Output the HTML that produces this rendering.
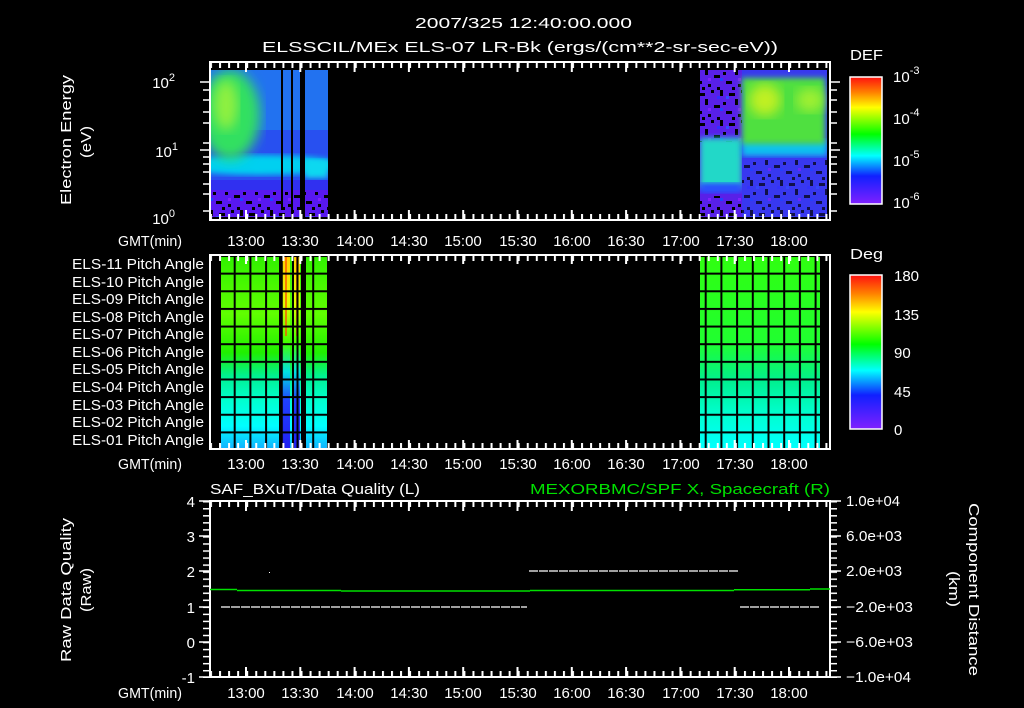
<!DOCTYPE html>
<html><head><meta charset="utf-8"><style>
html,body{margin:0;padding:0;background:#000;width:1024px;height:708px;overflow:hidden}
svg{display:block}
text{font-family:"Liberation Sans",sans-serif;fill:#fff;font-size:15px}
</style></head><body>
<svg width="1024" height="708" viewBox="0 0 1024 708" xmlns="http://www.w3.org/2000/svg">
<defs>
<linearGradient id="cb" x1="0" y1="0" x2="0" y2="1">
<stop offset="0" stop-color="#ff1010"/><stop offset="0.12" stop-color="#ff8000"/><stop offset="0.24" stop-color="#ffff00"/><stop offset="0.45" stop-color="#00ff00"/><stop offset="0.62" stop-color="#00ffff"/><stop offset="0.78" stop-color="#1020ff"/><stop offset="1" stop-color="#8020ff"/>
</linearGradient>
<pattern id="tx" x="210" y="0" width="9.05" height="708" patternUnits="userSpaceOnUse"><rect x="0" y="0" width="2" height="708" fill="#fff"/></pattern>
<pattern id="txM" x="245" y="0" width="54.3" height="708" patternUnits="userSpaceOnUse"><rect x="0" y="0" width="2" height="708" fill="#fff"/></pattern>
<pattern id="gv" x="218" y="0" width="15.7" height="708" patternUnits="userSpaceOnUse"><rect x="0" y="0" width="2" height="708" fill="#000"/></pattern>
<pattern id="gh" x="0" y="255" width="1024" height="17.64" patternUnits="userSpaceOnUse"><rect x="0" y="0" width="1024" height="2" fill="#000"/></pattern>
<pattern id="ty" x="0" y="501" width="1024" height="7.04" patternUnits="userSpaceOnUse"><rect x="0" y="0" width="1024" height="1.5" fill="#fff"/></pattern>
<pattern id="sp" x="0" y="0" width="30" height="30" patternUnits="userSpaceOnUse">
<rect x="0" y="0" width="3" height="6" fill="#000"/><rect x="9" y="3" width="6" height="3" fill="#000"/><rect x="21" y="0" width="3" height="3" fill="#000"/><rect x="3" y="12" width="3" height="3" fill="#000"/><rect x="15" y="9" width="3" height="6" fill="#000"/><rect x="24" y="15" width="6" height="3" fill="#000"/><rect x="6" y="21" width="6" height="3" fill="#000"/><rect x="18" y="24" width="3" height="3" fill="#000"/><rect x="27" y="27" width="3" height="3" fill="#000"/><rect x="12" y="27" width="3" height="3" fill="#000"/>
<rect x="27" y="6" width="3" height="3" fill="#3030ff"/><rect x="0" y="18" width="3" height="3" fill="#2040ff"/><rect x="18" y="18" width="3" height="3" fill="#8020ff"/><rect x="6" y="6" width="3" height="3" fill="#3050ff"/></pattern>
<filter id="bl"><feGaussianBlur stdDeviation="6"/></filter>
<filter id="bl2"><feGaussianBlur stdDeviation="3"/></filter>
<clipPath id="cL"><rect x="210" y="70" width="118" height="147"/></clipPath>
<clipPath id="cR"><rect x="700" y="70" width="127" height="147"/></clipPath>
</defs>

<text x="415" y="28" font-size="16" textLength="217" lengthAdjust="spacingAndGlyphs">2007/325 12:40:00.000</text>
<text x="262" y="52" font-size="16" textLength="516" lengthAdjust="spacingAndGlyphs">ELSSCIL/MEx ELS-07 LR-Bk  (ergs/(cm**2-sr-sec-eV))</text>

<!-- TOP PANEL data -->
<g clip-path="url(#cL)">
<rect x="210" y="70" width="118" height="147" fill="#2850f0"/>
<rect x="210" y="70" width="118" height="60" fill="#2080f0" opacity="0.7"/>
<ellipse cx="260" cy="165" rx="80" ry="10" fill="#00d0f0" filter="url(#bl2)"/>
<rect x="305" y="160" width="23" height="18" fill="#10d8f0" filter="url(#bl2)"/>
<ellipse cx="230" cy="115" rx="30" ry="45" fill="#30e060" filter="url(#bl)"/>
<ellipse cx="226" cy="105" rx="12" ry="25" fill="#90f040" filter="url(#bl)"/>
<rect x="210" y="180" width="118" height="12" fill="#3030f0"/>
<rect x="210" y="190" width="118" height="27" fill="#5818f0"/>
<rect x="210" y="192" width="118" height="25" fill="url(#sp)"/>
<rect x="281" y="70" width="2" height="140" fill="#000"/>
<rect x="291" y="70" width="2" height="147" fill="#000"/>
<rect x="300" y="70" width="5" height="147" fill="#000"/>
</g>
<g clip-path="url(#cR)">
<rect x="700" y="70" width="127" height="147" fill="#5820e8"/>
<rect x="700" y="70" width="42" height="72" fill="url(#sp)"/>
<rect x="700" y="138" width="42" height="50" fill="#20d8c8" filter="url(#bl2)"/>
<rect x="700" y="183" width="42" height="10" fill="#2850ff" filter="url(#bl2)"/>
<rect x="700" y="196" width="42" height="21" fill="url(#sp)"/>
<rect x="742" y="70" width="85" height="147" fill="#3838f0"/>
<rect x="742" y="160" width="85" height="57" fill="url(#sp)" opacity="0.7"/>
<rect x="742" y="140" width="85" height="16" fill="#10c0f0" filter="url(#bl2)"/>
<rect x="742" y="78" width="83" height="66" fill="#50e040" filter="url(#bl2)"/>
<ellipse cx="765" cy="100" rx="16" ry="16" fill="#c0f020" filter="url(#bl)"/>
<ellipse cx="810" cy="100" rx="14" ry="12" fill="#a0f030" filter="url(#bl)"/>
</g>
<!-- top frame -->
<rect x="210" y="62" width="620" height="158" fill="none" stroke="#fff" stroke-width="2"/>
<rect x="210" y="63" width="620" height="5" fill="url(#tx)"/>
<rect x="210" y="63" width="620" height="9" fill="url(#txM)"/>
<rect x="210" y="214" width="620" height="5" fill="url(#tx)"/>
<rect x="210" y="210" width="620" height="9" fill="url(#txM)"/>
<g stroke="#fff" stroke-width="1.5">
<path d="M200 82H210M203 90H210M203 100H210M203 112H210M203 123H210M203 143H210M200 150H210M203 157H210M203 164H210M203 172H210M203 184H210M203 194H210M203 211H210"/>
<path d="M830 82H840M830 90H837M830 100H837M830 112H837M830 123H837M830 143H837M830 150H840M830 157H837M830 164H837M830 172H837M830 184H837M830 194H837M830 211H837"/>
</g>
<text x="175" y="88" text-anchor="end">10<tspan dy="-7" font-size="11">2</tspan></text>
<text x="178" y="157" text-anchor="end">10<tspan dy="-7" font-size="11">1</tspan></text>
<text x="175" y="224" text-anchor="end">10<tspan dy="-7" font-size="11">0</tspan></text>
<text transform="translate(71,205) rotate(-90)" textLength="130" lengthAdjust="spacingAndGlyphs">Electron Energy</text>
<text transform="translate(91,158) rotate(-90)" textLength="32" lengthAdjust="spacingAndGlyphs">(eV)</text>
<text x="118" y="246" font-size="14" textLength="64" lengthAdjust="spacingAndGlyphs">GMT(min)</text>

<!-- colorbar 1 -->
<rect x="850" y="77" width="32" height="127" fill="url(#cb)" stroke="#fff" stroke-width="1.5"/>
<text x="850" y="60" font-size="16" textLength="33" lengthAdjust="spacingAndGlyphs">DEF</text>
<text x="893" y="82" font-size="16">10<tspan dy="-8" font-size="11">-3</tspan></text>
<text x="893" y="124" font-size="16">10<tspan dy="-8" font-size="11">-4</tspan></text>
<text x="893" y="166" font-size="16">10<tspan dy="-8" font-size="11">-5</tspan></text>
<text x="893" y="208" font-size="16">10<tspan dy="-8" font-size="11">-6</tspan></text>

<g font-size="14" text-anchor="middle">
<text x="246" y="246">13:00</text><text x="300" y="246">13:30</text><text x="355" y="246">14:00</text><text x="409" y="246">14:30</text><text x="463" y="246">15:00</text><text x="518" y="246">15:30</text><text x="572" y="246">16:00</text><text x="626" y="246">16:30</text><text x="681" y="246">17:00</text><text x="735" y="246">17:30</text><text x="789" y="246">18:00</text>
</g>

<!-- MIDDLE PANEL -->
<defs>
<linearGradient id="mL" x1="0" y1="0" x2="0" y2="1">
<stop offset="0" stop-color="#30f000"/><stop offset="0.3" stop-color="#60ff00"/><stop offset="0.5" stop-color="#20f000"/><stop offset="0.62" stop-color="#00f090"/><stop offset="0.75" stop-color="#00ffd0"/><stop offset="0.88" stop-color="#00ffff"/><stop offset="1" stop-color="#10b0ff"/>
</linearGradient>
<linearGradient id="mR" x1="0" y1="0" x2="0" y2="1">
<stop offset="0" stop-color="#30ff10"/><stop offset="0.45" stop-color="#20ff30"/><stop offset="0.65" stop-color="#00f090"/><stop offset="0.82" stop-color="#00ffd0"/><stop offset="1" stop-color="#00ffff"/>
</linearGradient>
<linearGradient id="mS" x1="0" y1="0" x2="0" y2="1">
<stop offset="0" stop-color="#ffd000"/><stop offset="0.25" stop-color="#e0ff00"/><stop offset="0.45" stop-color="#40ff00"/><stop offset="0.6" stop-color="#00e0e0"/><stop offset="0.75" stop-color="#2040ff"/><stop offset="1" stop-color="#2020f0"/>
</linearGradient>
</defs>
<rect x="221" y="256" width="106" height="193" fill="url(#mL)"/>
<rect x="282" y="256" width="8" height="193" fill="url(#mS)"/>
<rect x="285" y="256" width="2" height="80" fill="#ff5000" opacity="0.7"/>
<rect x="294" y="256" width="6" height="193" fill="url(#mS)"/>
<rect x="296" y="256" width="2" height="80" fill="#ff5000" opacity="0.7"/>
<rect x="700" y="256" width="120" height="193" fill="url(#mR)"/>
<rect x="221" y="256" width="106" height="193" fill="url(#gv)"/>
<rect x="700" y="256" width="120" height="193" fill="url(#gv)"/>
<rect x="221" y="256" width="106" height="193" fill="url(#gh)"/>
<rect x="700" y="256" width="120" height="193" fill="url(#gh)"/>
<rect x="279" y="256" width="2" height="193" fill="#000"/>
<rect x="292" y="256" width="2" height="193" fill="#000"/>
<rect x="301" y="256" width="5" height="193" fill="#000"/>
<rect x="210" y="255" width="620" height="194" fill="none" stroke="#fff" stroke-width="2"/>
<rect x="210" y="256" width="620" height="5" fill="url(#tx)"/>
<rect x="210" y="256" width="620" height="8" fill="url(#txM)"/>
<rect x="210" y="443" width="620" height="5" fill="url(#tx)"/>
<rect x="210" y="440" width="620" height="8" fill="url(#txM)"/>
<g font-size="13">
<text x="72" y="269" textLength="132" lengthAdjust="spacingAndGlyphs">ELS-11 Pitch Angle</text>
<text x="72" y="287" textLength="132" lengthAdjust="spacingAndGlyphs">ELS-10 Pitch Angle</text>
<text x="72" y="304" textLength="132" lengthAdjust="spacingAndGlyphs">ELS-09 Pitch Angle</text>
<text x="72" y="322" textLength="132" lengthAdjust="spacingAndGlyphs">ELS-08 Pitch Angle</text>
<text x="72" y="339" textLength="132" lengthAdjust="spacingAndGlyphs">ELS-07 Pitch Angle</text>
<text x="72" y="357" textLength="132" lengthAdjust="spacingAndGlyphs">ELS-06 Pitch Angle</text>
<text x="72" y="374" textLength="132" lengthAdjust="spacingAndGlyphs">ELS-05 Pitch Angle</text>
<text x="72" y="392" textLength="132" lengthAdjust="spacingAndGlyphs">ELS-04 Pitch Angle</text>
<text x="72" y="410" textLength="132" lengthAdjust="spacingAndGlyphs">ELS-03 Pitch Angle</text>
<text x="72" y="427" textLength="132" lengthAdjust="spacingAndGlyphs">ELS-02 Pitch Angle</text>
<text x="72" y="445" textLength="132" lengthAdjust="spacingAndGlyphs">ELS-01 Pitch Angle</text>
</g>
<text x="118" y="469" font-size="14" textLength="64" lengthAdjust="spacingAndGlyphs">GMT(min)</text>
<g font-size="14" text-anchor="middle">
<text x="246" y="469">13:00</text><text x="300" y="469">13:30</text><text x="355" y="469">14:00</text><text x="409" y="469">14:30</text><text x="463" y="469">15:00</text><text x="518" y="469">15:30</text><text x="572" y="469">16:00</text><text x="626" y="469">16:30</text><text x="681" y="469">17:00</text><text x="735" y="469">17:30</text><text x="789" y="469">18:00</text>
</g>
<rect x="850" y="275" width="32" height="154" fill="url(#cb)" stroke="#fff" stroke-width="1.5"/>
<text x="850" y="259" font-size="16" textLength="33" lengthAdjust="spacingAndGlyphs">Deg</text>
<g font-size="16"><text x="894" y="281">180</text><text x="894" y="320">135</text><text x="894" y="358">90</text><text x="894" y="397">45</text><text x="894" y="435">0</text></g>

<!-- BOTTOM PANEL -->
<text x="210" y="494" font-size="15" textLength="210" lengthAdjust="spacingAndGlyphs">SAF_BXuT/Data Quality (L)</text>
<text x="530" y="494" font-size="15" textLength="300" lengthAdjust="spacingAndGlyphs" style="fill:#00e000">MEXORBMC/SPF X, Spacecraft (R)</text>
<rect x="210" y="501" width="620" height="176" fill="none" stroke="#fff" stroke-width="2"/>
<rect x="210" y="502" width="620" height="5" fill="url(#tx)"/>
<rect x="210" y="502" width="620" height="9" fill="url(#txM)"/>
<rect x="210" y="671" width="620" height="5" fill="url(#tx)"/>
<rect x="210" y="667" width="620" height="9" fill="url(#txM)"/>
<rect x="203" y="501" width="7" height="177" fill="url(#ty)"/>
<rect x="830" y="501" width="7" height="177" fill="url(#ty)"/>
<g stroke="#fff" stroke-width="1.5"><path d="M199 501H210M199 536H210M199 571H210M199 607H210M199 642H210M199 677H210M830 501H841M830 536H841M830 571H841M830 607H841M830 642H841M830 677H841"/></g>
<path d="M210 589.5H237M237 590.5H341M341 591H530M530 590.5H734M734 589.8H810M810 589H830" stroke="#00e000" stroke-width="1.5" fill="none"/>
<path d="M221 607H527M529 571H738M740 607H820" stroke="#fff" stroke-width="1.2" stroke-dasharray="9 1" fill="none"/>
<rect x="269" y="572" width="1" height="1" fill="#fff"/>
<g font-size="15" text-anchor="end"><text x="195" y="507">4</text><text x="195" y="542">3</text><text x="195" y="577">2</text><text x="195" y="613">1</text><text x="195" y="648">0</text><text x="195" y="683">-1</text></g>
<g font-size="14"><text x="846" y="506" textLength="54" lengthAdjust="spacingAndGlyphs">1.0e+04</text><text x="846" y="541" textLength="56" lengthAdjust="spacingAndGlyphs">6.0e+03</text><text x="846" y="576" textLength="56" lengthAdjust="spacingAndGlyphs">2.0e+03</text><text x="846" y="612" textLength="67" lengthAdjust="spacingAndGlyphs">−2.0e+03</text><text x="846" y="647" textLength="67" lengthAdjust="spacingAndGlyphs">−6.0e+03</text><text x="846" y="682" textLength="65" lengthAdjust="spacingAndGlyphs">−1.0e+04</text></g>
<text transform="translate(71,662) rotate(-90)" textLength="144" lengthAdjust="spacingAndGlyphs">Raw Data Quality</text>
<text transform="translate(91,612) rotate(-90)" textLength="44" lengthAdjust="spacingAndGlyphs">(Raw)</text>
<text transform="translate(969,503) rotate(90)" textLength="173" lengthAdjust="spacingAndGlyphs">Component Distance</text>
<text transform="translate(949,571) rotate(90)" textLength="36" lengthAdjust="spacingAndGlyphs">(km)</text>
<text x="118" y="698" font-size="14" textLength="64" lengthAdjust="spacingAndGlyphs">GMT(min)</text>
<g font-size="14" text-anchor="middle">
<text x="246" y="698">13:00</text><text x="300" y="698">13:30</text><text x="355" y="698">14:00</text><text x="409" y="698">14:30</text><text x="463" y="698">15:00</text><text x="518" y="698">15:30</text><text x="572" y="698">16:00</text><text x="626" y="698">16:30</text><text x="681" y="698">17:00</text><text x="735" y="698">17:30</text><text x="789" y="698">18:00</text>
</g>
</svg>
</body></html>
